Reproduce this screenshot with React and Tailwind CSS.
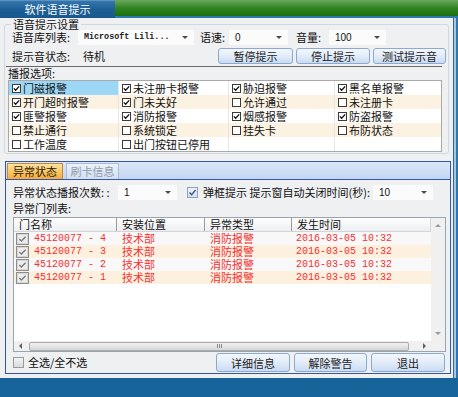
import React from 'react';

const Box = ({ on }) => (
  <svg width="9" height="9" viewBox="0 0 9 9" className="shrink-0">
    <rect x="0.5" y="0.5" width="8" height="8" fill="#fff" stroke="#3a3a3a" />
    {on && <path d="M1.8 4.4 L3.6 6.3 L7.2 2.4" fill="none" stroke="#111" strokeWidth="1.3" />}
  </svg>
);

const Arrow = ({ dir = 'down', color = '#4a4a4a' }) => {
  const d = {
    down: 'M0 0 L6 0 L3 3 Z',
    up: 'M0 3 L6 3 L3 0 Z',
    left: 'M3 0 L3 6 L0 3 Z',
    right: 'M0 0 L0 6 L3 3 Z',
  }[dir];
  const w = dir === 'left' || dir === 'right' ? 3 : 6;
  const h = dir === 'left' || dir === 'right' ? 6 : 3;
  return (
    <svg width={w} height={h} viewBox={`0 0 ${w} ${h}`} className="shrink-0">
      <path d={d} fill={color} />
    </svg>
  );
};

const Select = ({ value, className, mono }) => (
  <div className={`flex items-center h-[15px] bg-[#fbfbfb] pl-[6px] pr-[6px] ${className}`}>
    <span
      className={
        mono
          ? "flex-1 font-['Liberation_Mono',monospace] text-[8.4px] leading-[11px] font-bold text-[#222] whitespace-nowrap overflow-hidden"
          : "flex-1 font-['Liberation_Sans',sans-serif] text-[10px] leading-[11px] text-[#111]"
      }
    >
      {value}
    </span>
    <Arrow />
  </div>
);

const Btn = ({ children, className }) => (
  <div
    className={`flex items-center justify-center rounded-[3px] border border-[#8ca9cf] bg-gradient-to-b from-[#f3f7fd] via-[#e2ecf9] to-[#c9dbf2] text-[11px] leading-[12px] text-[#1c1c1c] ${className}`}
  >
    {children}
  </div>
);

const options = [
  [['门磁报警', 1], ['未注册卡报警', 1], ['胁迫报警', 1], ['黑名单报警', 1]],
  [['开门超时报警', 1], ['门未关好', 1], ['允许通过', 0], ['未注册卡', 0]],
  [['匪警报警', 1], ['消防报警', 1], ['烟感报警', 1], ['防盗报警', 1]],
  [['禁止通行', 0], ['系统锁定', 0], ['挂失卡', 0], ['布防状态', 0]],
  [['工作温度', 0], ['出门按钮已停用', 0], null, null],
];

const alarms = ['4', '3', '2', '1'];

const RowCheck = () => (
  <svg width="13" height="12" viewBox="0 0 13 12" className="shrink-0">
    <rect x="0.5" y="0.5" width="12" height="11" fill="#ececec" stroke="#8d8d8d" />
    <rect x="1.5" y="1.5" width="10" height="9" fill="none" stroke="#d6d6d6" />
    <path d="M3.3 6 L5.4 8 L9.6 3.8" fill="none" stroke="#7a7a7a" strokeWidth="1.4" />
  </svg>
);

export default function App() {
  return (
    <div className="w-[458px] h-[397px] overflow-hidden bg-[#17649a] font-['Noto_Sans_CJK_SC','Noto_Sans',sans-serif] leading-[13px] text-[11px] text-[#111]">
      {/* title bar */}
      <div className="flex h-[18px]">
        <div className="w-[115px] flex items-center justify-center bg-gradient-to-b from-[#3577ad] via-[#1c5f96] to-[#18588d] text-white text-[11px] border-t border-[#5b93c4]">
          软件语音提示
        </div>
        <div className="flex-1 flex flex-col">
          <div className="flex-1 bg-gradient-to-b from-[#6aa85a] via-[#2f8420] to-[#1c6e0f]" />
          <div className="h-[2px] bg-[#2b79ad]" />
        </div>
      </div>

      <div className="flex h-[360px]">
        {/* window body */}
        <div className="w-[453px] bg-[#eff0f2] flex flex-col">
          {/* voice settings */}
          <fieldset className="mx-[4px] border border-[#cdd8e0] rounded-[3px] pb-[1px] px-0">
            <legend className="ml-[6px] px-[2px] text-[11px] leading-[12px]">语音提示设置</legend>
            <div className="flex items-center h-[15px] pl-[7px]">
              <span className="w-[66px]">语音库列表:</span>
              <Select value="Microsoft Lili..." mono className="w-[116px]" />
              <span className="ml-[6px] w-[29px]">语速:</span>
              <Select value="0" className="w-[59px]" />
              <span className="ml-[8px] w-[33px]">音量:</span>
              <Select value="100" className="w-[57px]" />
            </div>
            <div className="flex items-center h-[16px] mt-[3px] pl-[7px] pr-[2px]">
              <span className="w-[71px]">提示音状态:</span>
              <span>待机</span>
              <div className="ml-auto flex gap-[3px]">
                <Btn className="w-[75px] h-[16px]">暂停提示</Btn>
                <Btn className="w-[74px] h-[16px]">停止提示</Btn>
                <Btn className="w-[73px] h-[16px]">测试提示音</Btn>
              </div>
            </div>
            {/* broadcast options */}
            <div className="mt-[2px] ml-[1px] mr-[6px] border-t border-[#6a6a6a] pl-[2px]">
              <div className="h-[13px] leading-[13px]">播报选项:</div>
              <div className="border border-[#a9a9a9] bg-white">
                {options.map((row, i) => (
                  <div
                    key={i}
                    className={`grid grid-cols-[110px_110px_106px_1fr] h-[14px] ${i % 2 ? 'bg-[#fcf2e2]' : 'bg-white'}`}
                  >
                    {row.map((c, j) => (
                      <div
                        key={j}
                        className={`flex items-center gap-[2px] pl-[3px] text-[11px] leading-[12px] ${j < 3 ? 'border-r border-[#e6e6e6]' : ''} ${i === 0 && j === 0 ? 'bg-[#9cd8f5]' : ''}`}
                      >
                        {c && (
                          <>
                            <Box on={c[1]} />
                            <span>{c[0]}</span>
                          </>
                        )}
                      </div>
                    ))}
                  </div>
                ))}
              </div>
            </div>
          </fieldset>

          {/* tab panel */}
          <div className="mt-[7px] ml-[5px] mr-[2px] border border-[#3556a8] flex flex-col">
            <div className="h-[18px] flex items-end gap-[3px] pl-[1px] bg-gradient-to-b from-[#dbe7f8] to-[#c3d6f1] border-b border-[#3556a8]">
              <div className="w-[56px] h-[16px] flex items-center justify-center border border-b-0 border-[#c08a3c] bg-gradient-to-b from-[#ffe2a0] via-[#fbc768] to-[#f5ab3a] text-[11px] text-[#2a1a00]">
                异常状态
              </div>
              <div className="w-[53px] h-[16px] flex items-center justify-center border border-b-0 border-[#a8bcd6] bg-gradient-to-b from-[#eaf1fa] to-[#d3e0f1] text-[11px] text-[#8d9bab]">
                刷卡信息
              </div>
            </div>
            <div className="bg-[#eff0f2] pl-[7px] pr-[4px] flex flex-col">
              <div className="flex items-center h-[15px] mt-[5px]">
                <span className="w-[105px] whitespace-nowrap">异常状态播报次数: :</span>
                <Select value="1" className="w-[59px]" />
                <div className="ml-[10px] w-[11px] h-[11px] border border-[#8ea2c0] bg-gradient-to-b from-[#eef3fb] to-[#d3e0f2] flex items-center justify-center">
                  <svg width="9" height="9" viewBox="0 0 9 9">
                    <path d="M1.5 4.6 L3.6 6.8 L7.6 2" fill="none" stroke="#3a5a8a" strokeWidth="1.4" />
                  </svg>
                </div>
                <span className="ml-[5px] whitespace-nowrap">弹框提示 提示窗自动关闭时间(秒):</span>
                <Select value="10" className="w-[60px] ml-auto mr-[13px]" />
              </div>
              <div className="h-[13px] mt-[2px]">异常门列表:</div>
              {/* table */}
              <div className="mt-[2px] border border-[#9ba4ad] bg-white flex flex-col h-[135px]">
                <div className="flex flex-1">
                  <div className="flex-1 flex flex-col">
                    <div className="flex h-[14px] bg-gradient-to-b from-[#ffffff] to-[#eceef1] border-b border-[#d5d5d5] text-[11px] leading-[13px]">
                      <div className="w-[103px] pl-[5px] border-r border-[#9a9a9a]">门名称</div>
                      <div className="w-[88px] pl-[5px] border-r border-[#9a9a9a]">安装位置</div>
                      <div className="w-[87px] pl-[5px] border-r border-[#9a9a9a]">异常类型</div>
                      <div className="flex-1 pl-[5px] border-r border-[#d5d5d5]">发生时间</div>
                    </div>
                    {alarms.map((n, i) => (
                      <div
                        key={n}
                        className={`flex items-center h-[13px] leading-[11px] text-[#f53030] ${i % 2 ? 'bg-[#fdf0df]' : 'bg-[#f8f8f8]'}`}
                      >
                        <div className="w-[103px] flex items-center pl-[2px] gap-[5px]">
                          <RowCheck />
                          <span className="font-['Liberation_Mono',monospace] text-[10px] whitespace-pre">{`45120077 - ${n}`}</span>
                        </div>
                        <div className="w-[88px] pl-[5px]">技术部</div>
                        <div className="w-[87px] pl-[5px]">消防报警</div>
                        <div className="flex-1 pl-[4px] font-['Liberation_Mono',monospace] text-[10px] whitespace-pre">2016-03-05 10:32</div>
                      </div>
                    ))}
                  </div>
                  {/* vertical scrollbar */}
                  <div className="w-[14px] bg-[#f0f0f0] flex flex-col items-center justify-between pt-[6px] pb-[6px]">
                    <Arrow dir="up" color="#9a9a9a" />
                    <Arrow dir="down" color="#9a9a9a" />
                  </div>
                </div>
                {/* horizontal scrollbar */}
                <div className="flex h-[10px] bg-[#f0f0f0]">
                  <div className="flex-1 flex items-center pl-[5px] pr-[5px]">
                    <Arrow dir="left" color="#606060" />
                    <div className="ml-[7px] w-[380px] h-[9px] rounded-[2px] border border-[#a9a9a9] bg-gradient-to-b from-[#f1f1f1] to-[#d6d6d6] flex items-center justify-center">
                      <div className="flex gap-[1px]">
                        <div className="w-[1px] h-[4px] bg-[#8a8a8a]" />
                        <div className="w-[1px] h-[4px] bg-[#8a8a8a]" />
                        <div className="w-[1px] h-[4px] bg-[#8a8a8a]" />
                      </div>
                    </div>
                    <div className="ml-auto">
                      <Arrow dir="right" color="#606060" />
                    </div>
                  </div>
                  <div className="w-[14px] bg-[#f0f0f0]" />
                </div>
              </div>
              {/* bottom row */}
              <div className="flex items-center h-[19px] mt-[1px] mb-[1px]">
                <div className="w-[11px] h-[11px] border border-[#9a9a9a] bg-gradient-to-b from-[#f4f4f4] to-[#dcdcdc]" />
                <span className="ml-[4px]">全选/全不选</span>
                <div className="ml-auto flex gap-[4px] mr-[1px]">
                  <Btn className="w-[74px] h-[19px]">详细信息</Btn>
                  <Btn className="w-[73px] h-[19px]">解除警告</Btn>
                  <Btn className="w-[74px] h-[19px]">退出</Btn>
                </div>
              </div>
            </div>
          </div>
        </div>
        {/* right frame */}
        <div className="flex-1 flex">
          <div className="w-[1px] bg-[#2e69a6]" />
          <div className="flex-1 bg-[#a9c6e0]" />
          <div className="w-[2px] bg-[#2f76ac]" />
        </div>
      </div>
    </div>
  );
}
